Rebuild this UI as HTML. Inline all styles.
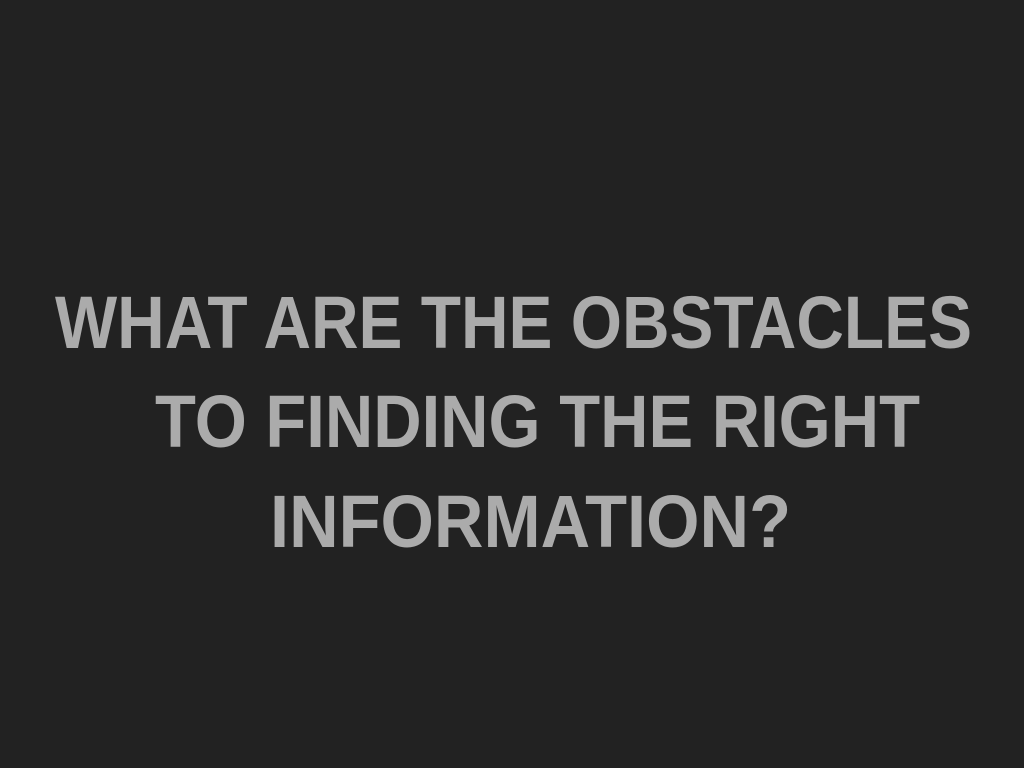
<!DOCTYPE html>
<html><head><meta charset="utf-8"><style>
html,body{margin:0;padding:0;background:#222222;width:1024px;height:768px;overflow:hidden}
svg{display:block}
text{font-family:"Liberation Sans",sans-serif;font-weight:bold;font-size:74px;fill:#ababab}
</style></head><body>
<svg width="1024" height="768" viewBox="0 0 1024 768">
<text x="55" y="348" textLength="917" lengthAdjust="spacingAndGlyphs">WHAT ARE THE OBSTACLES</text>
<text x="155" y="447" textLength="765" lengthAdjust="spacingAndGlyphs">TO FINDING THE RIGHT</text>
<text x="270" y="547" textLength="521" lengthAdjust="spacingAndGlyphs">INFORMATION?</text>
</svg>
</body></html>
